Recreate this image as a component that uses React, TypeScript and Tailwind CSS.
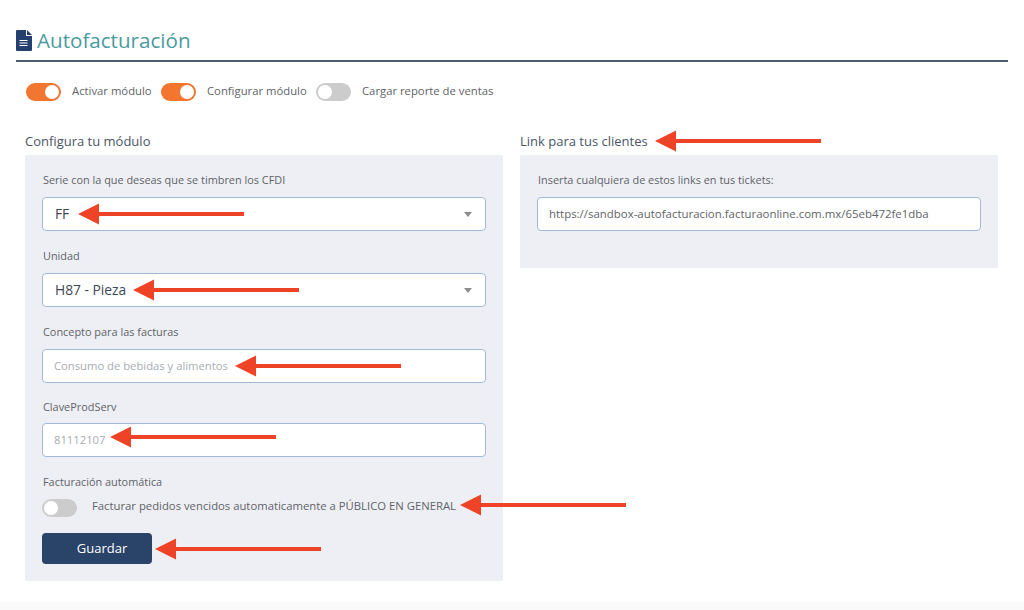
import React from 'react';

function Toggle({ on, className = '' }: { on: boolean; className?: string }) {
  return (
    <div
      className={`flex h-[18px] w-[35px] shrink-0 items-center rounded-full px-[2px] ${
        on ? 'justify-end bg-[#f27530]' : 'justify-start bg-[#cccccc]'
      } ${className}`}
    >
      <div className="h-[14px] w-[14px] rounded-full bg-white" />
    </div>
  );
}

function Label({ children }: { children: React.ReactNode }) {
  return <div className="h-[18px] pl-px text-[10.9px] leading-[20px] text-[#5f6368]">{children}</div>;
}

function SelectBox({ value }: { value: string }) {
  return (
    <div className="mt-[9px] flex h-[34px] items-center justify-between rounded-[4px] border border-[#a3b8d4] bg-white pl-3 pr-[13px] text-[13.8px] text-[#3d4757]">
      <span>{value}</span>
      <div className="h-0 w-0 border-x-[4px] border-t-[5px] border-x-transparent border-t-[#8d8d8d]" />
    </div>
  );
}

function TextBox({ value, placeholder }: { value?: string; placeholder?: string }) {
  return (
    <div className="mt-[9px] flex h-[34px] items-center rounded-[4px] border border-[#a3b8d4] bg-white px-[11px]">
      {value ? (
        <span className="text-[11.45px] text-[#5f6368]">{value}</span>
      ) : (
        <span className="text-[11.25px] text-[#a9adb3]">{placeholder}</span>
      )}
    </div>
  );
}

function Arrow({ tip, y }: { tip: number; y: number }) {
  return (
    <svg className="absolute" style={{ left: tip, top: y - 12 }} width="168" height="24" viewBox="0 0 168 24">
      <path d="M0 12 L21 1.5 L21 10 L166 10 L166 14 L21 14 L21 22.5 Z" fill="#ee4326" />
    </svg>
  );
}

export default function App() {
  return (
    <div className="relative h-[610px] w-[1024px] overflow-hidden bg-white font-['Open_Sans',sans-serif]">
      <div className="px-4 pt-[30px]">
        <div className="box-content flex h-[30px] items-start gap-[5px] border-b-2 border-[#4a5d75]">
          <svg width="16" height="21" viewBox="0 0 16 21" className="shrink-0">
            <path d="M1 0 H10 V6 H16 V20 a1 1 0 0 1 -1 1 H1 a1 1 0 0 1 -1 -1 V1 a1 1 0 0 1 1 -1 Z" fill="#23406f" />
            <path d="M11 0 L16 5 H11 Z" fill="#23406f" />
            <path d="M3.5 10.5 H11.5 M3.5 13 H11.5 M3.5 15.5 H11.5" stroke="#ffffff" strokeWidth="1.1" />
          </svg>
          <div className="text-[20.6px] leading-[21px] text-[#4a9aa0]">Autofacturación</div>
        </div>
      </div>

      <div className="mt-[21px] flex items-center pl-[26px] text-[11.3px] leading-[15px] text-[#5f6368]">
        <Toggle on />
        <span className="mb-[3px] ml-[11px] w-[89px]">Activar módulo</span>
        <Toggle on />
        <span className="mb-[3px] ml-[11px] w-[109px]">Configurar módulo</span>
        <Toggle on={false} />
        <span className="mb-[3px] ml-[11px]">Cargar reporte de ventas</span>
      </div>

      <div className="mt-[31px] flex items-start gap-[17px] pl-[25px]">
        <div className="w-[478px]">
          <div className="h-[18px] text-[13px] leading-[18px] text-[#4a5566]">Configura tu módulo</div>
          <div className="mt-[5px] h-[426px] bg-[#eeeff4] px-[17px] pt-[15px]">
            <Label>Serie con la que deseas que se timbren los CFDI</Label>
            <SelectBox value="FF" />
            <div className="mt-[15px]">
              <Label>Unidad</Label>
            </div>
            <SelectBox value="H87 - Pieza" />
            <div className="mt-[15px]">
              <Label>Concepto para las facturas</Label>
            </div>
            <TextBox placeholder="Consumo de bebidas y alimentos" />
            <div className="mt-[14px]">
              <Label>ClaveProdServ</Label>
            </div>
            <div className="-mt-px">
              <TextBox placeholder="81112107" />
            </div>
            <div className="mt-[15px]">
              <Label>Facturación automática</Label>
            </div>
            <div className="mt-[8px] flex items-center">
              <Toggle on={false} />
              <span className="mb-[4px] ml-[15px] text-[11.3px] leading-[15px] text-[#5f6368]">
                Facturar pedidos vencidos automaticamente a PÚBLICO EN GENERAL
              </span>
            </div>
            <div className="mt-[16px] flex h-[31px] w-[110px] items-center justify-center rounded-[4px] bg-[#2a4369] pl-[10px] text-[13px] text-white">
              Guardar
            </div>
          </div>
        </div>

        <div className="w-[478px]">
          <div className="h-[18px] text-[13px] leading-[18px] text-[#4a5566]">Link para tus clientes</div>
          <div className="mt-[5px] h-[113px] bg-[#eeeff4] px-[17px] pt-[15px]">
            <Label>Inserta cualquiera de estos links en tus tickets:</Label>
            <TextBox value="https://sandbox-autofacturacion.facturaonline.com.mx/65eb472fe1dba" />
          </div>
        </div>
      </div>

      <div className="absolute inset-x-0 bottom-0 h-[8px] bg-[#fafafa]" />

      <Arrow tip={655} y={141} />
      <Arrow tip={78} y={214} />
      <Arrow tip={133} y={290} />
      <Arrow tip={235} y={366} />
      <Arrow tip={110} y={437} />
      <Arrow tip={460} y={505} />
      <Arrow tip={155} y={549} />
    </div>
  );
}
